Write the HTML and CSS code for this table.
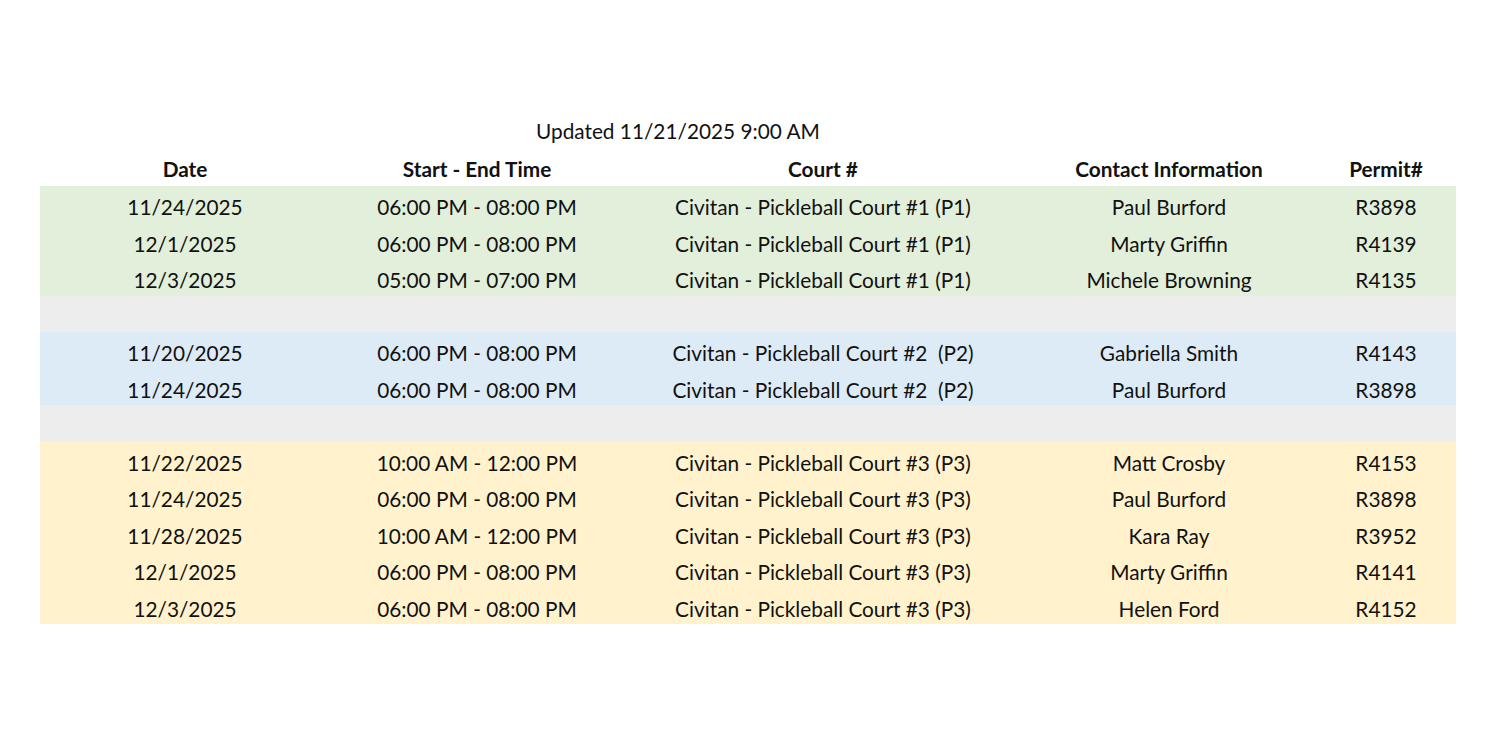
FILE: index.html
```html
<!DOCTYPE html>
<html>
<head>
<meta charset="utf-8">
<link rel="stylesheet" href="styles.css">
</head>
<body>
<div class="sheet">
  <div class="updated">Updated 11/21/2025 9:00 AM</div>
  <div class="row head">
    <div>Date</div><div>Start - End Time</div><div>Court #</div><div>Contact Information</div><div>Permit#</div>
  </div>
  <div class="row green"><div>11/24/2025</div><div>06:00 PM - 08:00 PM</div><div>Civitan - Pickleball Court #1 (P1)</div><div>Paul Burford</div><div>R3898</div></div>
  <div class="row green"><div>12/1/2025</div><div>06:00 PM - 08:00 PM</div><div>Civitan - Pickleball Court #1 (P1)</div><div>Marty Griffin</div><div>R4139</div></div>
  <div class="row green"><div>12/3/2025</div><div>05:00 PM - 07:00 PM</div><div>Civitan - Pickleball Court #1 (P1)</div><div>Michele Browning</div><div>R4135</div></div>
  <div class="row gray"></div>
  <div class="row blue"><div>11/20/2025</div><div>06:00 PM - 08:00 PM</div><div class="pre">Civitan - Pickleball Court #2  (P2)</div><div>Gabriella Smith</div><div>R4143</div></div>
  <div class="row blue"><div>11/24/2025</div><div>06:00 PM - 08:00 PM</div><div class="pre">Civitan - Pickleball Court #2  (P2)</div><div>Paul Burford</div><div>R3898</div></div>
  <div class="row gray"></div>
  <div class="row yellow"><div>11/22/2025</div><div>10:00 AM - 12:00 PM</div><div>Civitan - Pickleball Court #3 (P3)</div><div>Matt Crosby</div><div>R4153</div></div>
  <div class="row yellow"><div>11/24/2025</div><div>06:00 PM - 08:00 PM</div><div>Civitan - Pickleball Court #3 (P3)</div><div>Paul Burford</div><div>R3898</div></div>
  <div class="row yellow"><div>11/28/2025</div><div>10:00 AM - 12:00 PM</div><div>Civitan - Pickleball Court #3 (P3)</div><div>Kara Ray</div><div>R3952</div></div>
  <div class="row yellow"><div>12/1/2025</div><div>06:00 PM - 08:00 PM</div><div>Civitan - Pickleball Court #3 (P3)</div><div>Marty Griffin</div><div>R4141</div></div>
  <div class="row yellow"><div>12/3/2025</div><div>06:00 PM - 08:00 PM</div><div>Civitan - Pickleball Court #3 (P3)</div><div>Helen Ford</div><div>R4152</div></div>
</div>
</body>
</html>
```

FILE: styles.css
```css
html, body {
  margin: 0;
  background: #ffffff;
}
body {
  font-family: Lato, "Liberation Sans", sans-serif;
  color: #111111;
  font-size: 20.8px;
}
.sheet {
  padding: 118px 0 0 40px;
  width: 1416px;
}
.updated {
  height: 32px;
  line-height: 26px;
  padding-left: 496px;
}
.row {
  display: grid;
  grid-template-columns: 290px 294px 398px 294px 140px;
  box-sizing: border-box;
  height: 36.5px;
  padding-top: 5px;
  align-items: center;
  text-align: center;
  white-space: nowrap;
}
.row.head {
  height: 36px;
  padding-top: 0;
  font-weight: bold;
}
.pre {
  white-space: pre;
}
.green { background: #e2efda; }
.gray { background: #ededed; }
.blue { background: #ddebf7; }
.yellow { background: #fff2cc; }
```
